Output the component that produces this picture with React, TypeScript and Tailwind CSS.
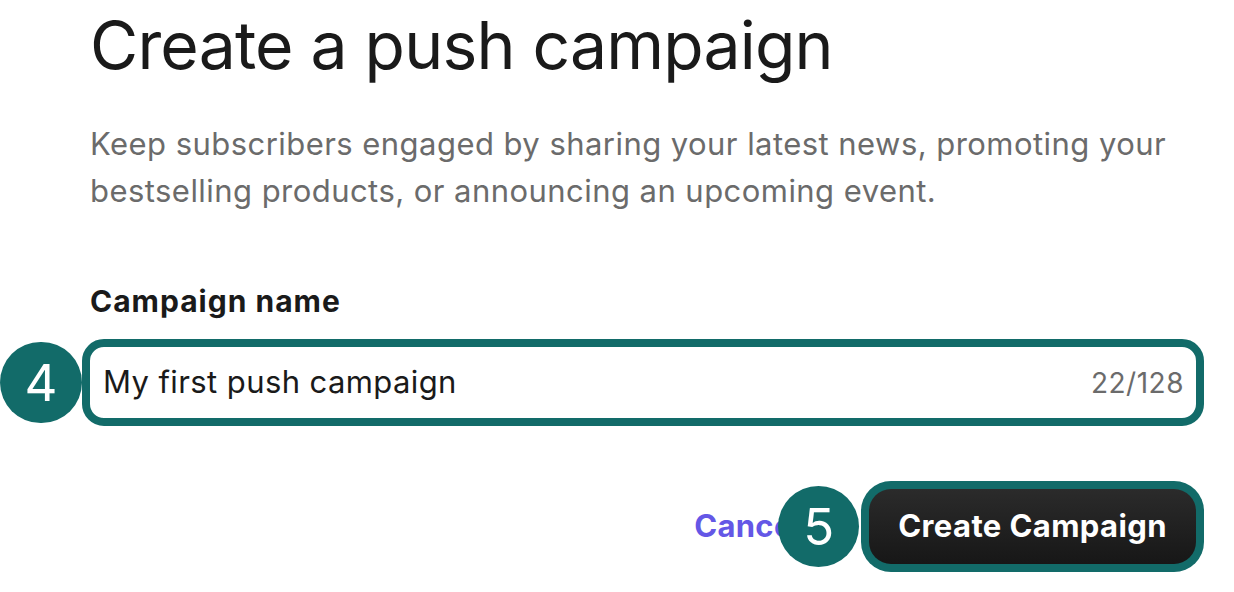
const Badge: React.FC<{ n: number; className?: string }> = ({ n, className }) => (
  <div
    className={`relative flex h-[81px] w-[81px] shrink-0 items-center justify-center rounded-full bg-[#126b69] text-[51px] leading-none text-white ${className ?? ""}`}>
    {n}
  </div>
)

export default function App() {
  return (
    <div className="h-[592px] w-[1234px] overflow-hidden bg-white font-['Inter',sans-serif]">
      <div className="pl-[90px] pr-[30px] pt-[9px]">
        <h1 className="text-[66px] leading-[72px] tracking-[-0.8px] text-[#1a1a1a]">Create a push campaign</h1>
        <p className="mt-[39px] text-[31px] leading-[47px] tracking-[0.45px] text-[#6b6b6b]">
          Keep subscribers engaged by sharing your latest news, promoting your bestselling products, or announcing an upcoming event.
        </p>
        <label className="mt-[69px] block text-[30px] font-bold leading-[36px] tracking-[1px] text-[#1a1a1a]">
          Campaign name
        </label>
      </div>

      {/* input row */}
      <div className="mt-[20px] flex items-center pr-[30px]">
        <Badge n={4} className="w-[82px]" />
        <div className="flex h-[87px] flex-1 items-center justify-between rounded-[22px] border-[8px] border-[#126b69] bg-white pl-[13px] pr-[12px]">
          <span className="text-[31px] tracking-[0.4px] text-[#1a1a1a]">My first push campaign</span>
          <span className="text-[28px] tracking-[0.5px] text-[#6b6b6b]">22/128</span>
        </div>
      </div>

      {/* actions */}
      <div className="mt-[55px] flex items-center justify-end pr-[30px]">
        <span className="w-[84px] whitespace-nowrap text-[31px] font-bold tracking-[0.3px] text-[#6457e6]">Cancel</span>
        <Badge n={5} className="mr-[2px]" />
        <div className="rounded-[30px] bg-[#126b69] p-[8px]">
          <button className="h-[75px] rounded-[22px] bg-gradient-to-b from-[#2b2b2b] to-[#171717] px-[29px] text-[31px] font-bold tracking-[0.4px] text-white">
            Create Campaign
          </button>
        </div>
      </div>
    </div>
  )
}
